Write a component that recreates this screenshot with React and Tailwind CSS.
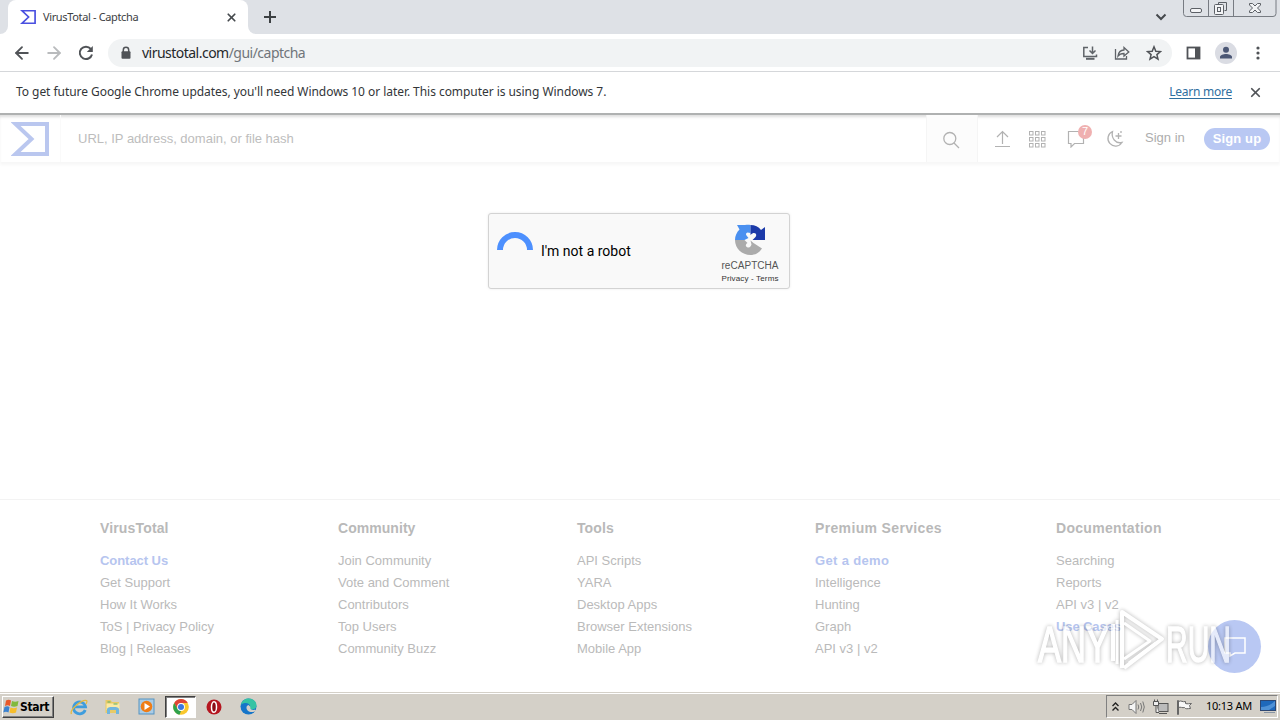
import { ArrowLeft, ArrowRight, X } from 'lucide-react'

const footerColumns = [
  {
    title: 'VirusTotal',
    width: 'w-[238px]',
    spacing: 'tracking-[0.15px]',
    linkSpacing: 'tracking-[-0.05px]',
    links: ['Contact Us', 'Get Support', 'How It Works', 'ToS | Privacy Policy', 'Blog | Releases'],
    highlighted: ['Contact Us'],
  },
  {
    title: 'Community',
    width: 'w-[239px]',
    spacing: 'tracking-[0.05px]',
    linkSpacing: '',
    links: ['Join Community', 'Vote and Comment', 'Contributors', 'Top Users', 'Community Buzz'],
    highlighted: [],
  },
  {
    title: 'Tools',
    width: 'w-[238px]',
    spacing: 'tracking-[0.1px]',
    linkSpacing: '',
    links: ['API Scripts', 'YARA', 'Desktop Apps', 'Browser Extensions', 'Mobile App'],
    highlighted: [],
  },
  {
    title: 'Premium Services',
    width: 'w-[241px]',
    spacing: 'tracking-[0.35px]',
    linkSpacing: 'tracking-[0.35px]',
    links: ['Get a demo', 'Intelligence', 'Hunting', 'Graph', 'API v3 | v2'],
    highlighted: ['Get a demo'],
  },
  {
    title: 'Documentation',
    width: 'w-[180px]',
    spacing: 'tracking-[0.3px]',
    linkSpacing: 'tracking-[-0.1px]',
    links: ['Searching', 'Reports', 'API v3 | v2', 'Use Cases'],
    highlighted: ['Use Cases'],
  },
]

const Sigma = ({ className }) => (
  <svg className={className} viewBox="0 0 38 34" fill="none" stroke="currentColor" strokeWidth="4">
    <path d="M4.5 2H36V32H4.5L20.5 17Z" />
  </svg>
)

const TabStrip = () => (
  <div className="flex h-[34px] bg-[#dee1e6]">
    <div className="w-2 h-full bg-white">
      <div className="h-full rounded-br-lg bg-[#dee1e6]"></div>
    </div>
    <div className="w-[240px] h-full rounded-t-lg bg-white flex items-center pl-3 pr-2.5">
      <Sigma className="w-4 h-4 text-[#4a50e0]" />
      <span className="ml-[7px] w-[183px] whitespace-nowrap text-[11px] tracking-[-0.35px] text-[#3c4043]">VirusTotal - Captcha</span>
      <X size={13} strokeWidth={3.2} className="shrink-0 text-[#45494d]" />
    </div>
    <div className="w-2 h-full bg-white">
      <div className="h-full rounded-bl-lg bg-[#dee1e6]"></div>
    </div>
    <svg className="w-3.5 h-3.5 ml-[7px] mt-2.5" viewBox="0 0 14 14" stroke="#3c4043" strokeWidth="2">
      <path d="M7 1v12M1 7h12" />
    </svg>
    <svg className="w-3 h-3 ml-auto mt-[11px] mr-4" viewBox="0 0 12 12" fill="none" stroke="#45494d" strokeWidth="2">
      <path d="M1.500 3.500L6 8l4.500-4.500" />
    </svg>
    <svg className="w-[94px] h-[18px] mr-[3px]" viewBox="0 0 94 18" fill="none" stroke="#777b82">
      <path d="M.5 0V13.500Q.5 16.500 3.500 16.500H90Q93 16.500 93 13.500V0M25.500 0V16.500M50.500 0V16.500" />
      <g stroke="#5c6066">
        <rect x="7.500" y="8.500" width="11" height="4" rx="1.500" fill="#f3f4f6" />
        <path d="M35.500 4.500V2.500h8v8h-2" />
        <rect x="31.500" y="4.500" width="9" height="10" rx="1" fill="#f3f4f6" />
        <rect x="34.500" y="7.500" width="3" height="4" />
        <path fill="#f3f4f6" d="M66.500 3.500h3l2.500 2.500 2.500-2.500h3v1.500l-3 3 3 3v1.500h-3L72 10l-2.500 2.500h-3V11l3-3-3-3z" />
      </g>
    </svg>
  </div>
)

const AddressBar = () => (
  <div className="flex h-[38px] items-center border-b border-[#d5d7da] bg-white">
    <div className="flex w-[108px] items-center pl-3 gap-3">
      <ArrowLeft size={20} strokeWidth={2.2} className="text-[#505357]" />
      <ArrowRight size={20} strokeWidth={2.2} className="text-[#b9bbbd]" />
      <svg className="ml-0.5 w-4 h-4" viewBox="0 0 16 16" fill="none" stroke="#505357" strokeWidth="2">
        <path d="M12.800 3.900A6.200 6.200 0 1 0 14 9.500" />
        <path d="M14.800 1v6h-6z" fill="#505357" stroke="none" />
      </svg>
    </div>
    <div className="flex h-7 w-[1064px] items-center rounded-full bg-[#f1f3f4] pl-[13px]">
      <svg className="w-2.5 h-3.5" viewBox="0 0 10 14">
        <path d="M2.300 6V4a2.700 2.700 0 0 1 5.400 0v2" fill="none" stroke="#505357" strokeWidth="1.500" />
        <rect x=".5" y="5.200" width="9" height="7.600" rx="1" fill="#505357" />
      </svg>
      <span className="ml-[11px] whitespace-nowrap text-[14px] tracking-[-0.52px] text-[#25282b]">
        virustotal.com<span className="text-[#70757a]">/gui/captcha</span>
      </span>
      <div className="ml-auto mr-2.5 flex items-center gap-4">
        <svg className="w-4 h-4" viewBox="0 0 16 16" fill="none" stroke="#5f6368" strokeWidth="1.500">
          <path d="M6 2.500H1.800v9h12.700V9.500M10.500 1.500v6.500M7.500 5.500l3 3 3-3" />
          <path d="M4 13.800h8.500" strokeWidth="2" />
        </svg>
        <svg className="w-4 h-4" viewBox="0 0 16 16" fill="none" stroke="#5f6368" strokeWidth="1.300">
          <path d="M1.500 4v10h11v-3M4 11c.5-4 2.500-5.800 6-6V2.500L14.800 7 10 11V8.500C7 8.500 5.500 9 4 11z" />
        </svg>
        <svg className="w-4 h-4" viewBox="0 0 16 16" fill="none" stroke="#505357" strokeWidth="1.500">
          <path d="M8 1.800l1.800 4.400 4.700.4-3.600 3 1.100 4.600L8 11.700l-4 2.500 1.100-4.600-3.600-3 4.700-.4z" />
        </svg>
      </div>
    </div>
    <svg className="w-[15px] h-3.5 ml-3.5" viewBox="0 0 15 14">
      <rect x="1.500" y="1.500" width="12" height="11" fill="none" stroke="#505357" strokeWidth="1.800" />
      <path d="M9 1.500h4.500v11H9z" fill="#505357" />
    </svg>
    <svg className="w-[22px] h-[22px] ml-3.5" viewBox="0 0 22 22">
      <circle cx="11" cy="11" r="11" fill="#dadce3" />
      <circle cx="11" cy="7.800" r="3" fill="#4b5775" />
      <path d="M5 16.500v-1.500c0-2 3.500-3 6-3s6 1 6 3v1.500z" fill="#4b5775" />
    </svg>
    <svg className="w-4 h-4 ml-[13px]" viewBox="0 0 16 16" fill="#505357">
      <circle cx="8" cy="3" r="1.600" />
      <circle cx="8" cy="8" r="1.600" />
      <circle cx="8" cy="13" r="1.600" />
    </svg>
  </div>
)

const UpdateNotice = () => (
  <div className="flex h-[41px] items-center bg-white pl-4 pr-[17px] pb-0.5 text-[12px] text-[#333639]">
    <span className="whitespace-nowrap tracking-[-0.05px]">
      To get future Google Chrome updates, you&apos;ll need Windows 10 or later. This computer is using Windows 7.
    </span>
    <a className="ml-auto whitespace-nowrap tracking-[-0.25px] text-[#2f6f9f] underline underline-offset-2">Learn more</a>
    <X size={15} strokeWidth={2.8} className="ml-[16px] mt-0.5 text-[#505357]" />
  </div>
)

const SiteHeader = () => (
  <header className="flex h-[49px] border-t-2 border-[#afb1b1] bg-white font-['Liberation_Sans',sans-serif] shadow-[inset_0_3px_3px_-1px_#dedede,0_3px_3px_#f7f7f7] text-[13px]">
    <div className="flex w-[61px] items-center border-r border-[#fafafa] pl-[11px]">
      <Sigma className="w-[38px] h-[34px] text-[#bac7ef]" />
    </div>
    <div className="flex grow items-center pl-[17px] text-[#bdbdbd]">URL, IP address, domain, or file hash</div>
    <div className="flex w-[52px] items-center justify-center border-x border-[#f5f5f5] bg-[#fcfcfc]">
      <svg className="mt-0.5 mr-0.5 w-[18px] h-[18px]" viewBox="0 0 18 18" fill="none" stroke="#b2b2b2" strokeWidth="1.300">
        <circle cx="7.800" cy="7.500" r="6" />
        <path d="M12 12l5 5" />
      </svg>
    </div>
    <div className="flex w-[302px] items-center pl-[15px]">
      <svg className="w-[18px] h-[18px]" viewBox="0 0 18 18" fill="none" stroke="#b2b2b2" strokeWidth="1.200">
        <path d="M9.500 14V1.500M4 7L9.500 1.500 15 7M2 16.500h15" />
      </svg>
      <svg className="ml-[17px] w-[18px] h-[18px]" viewBox="0 0 18 18" fill="none" stroke="#b2b2b2">
        {[1.5, 7.5, 13.5].map((y) =>
          [1.5, 7.5, 13.5].map((x) => <rect key={`${x}-${y}`} x={x} y={y} width="3.500" height="3.500" />)
        )}
      </svg>
      <div className="relative ml-[21px]">
        <svg className="w-[18px] h-[18px]" viewBox="0 0 18 18" fill="none" stroke="#b2b2b2" strokeWidth="1.200">
          <path d="M1.500 1.500h15v12h-9l-3.500 3.500v-3.500H1.500z" />
        </svg>
        <span className="absolute -top-[5px] left-[11px] flex h-3.5 w-3.5 items-center justify-center rounded-full bg-[#efb0b0] text-[11px] text-white">7</span>
      </div>
      <svg className="ml-[21px] w-[18px] h-[18px]" viewBox="0 0 18 18" fill="none" stroke="#b2b2b2" strokeWidth="1.300">
        <path d="M6.500 1.500a7.600 7.600 0 1 0 9.500 11C9.500 14 5 8 6.500 1.500z" />
        <path d="M12.500 3v6M9.500 6h6M15 1v2" />
      </svg>
      <span className="-mt-0.5 ml-[21px] w-[59px] whitespace-nowrap text-[#adadad]">Sign in</span>
      <button className="h-[22px] w-[66px] whitespace-nowrap rounded-full bg-[#b9c8f3] text-[13px] font-bold tracking-[0.1px] text-white">Sign up</button>
    </div>
  </header>
)

const Captcha = () => (
  <div className="mt-[51px] ml-[488px] flex h-[76px] w-[302px] rounded-[3px] border border-[#d3d3d3] bg-[#f9f9f9] shadow-[0_0_3px_rgba(0,0,0,0.08)]">
    <svg className="ml-2 mt-[18px] w-9 h-[18px]" viewBox="0 0 36 18" fill="none" stroke="#4d90fe" strokeWidth="6">
      <path d="M3 18a15 15 0 0 1 30 0" />
    </svg>
    <span className="ml-2 mt-[27px] w-[171px] whitespace-nowrap font-['Roboto',sans-serif] text-[14px] leading-5 text-black">I&apos;m not a robot</span>
    <div className="mt-2.5 flex w-[76px] flex-col items-center font-['Liberation_Sans',sans-serif] text-[#555]">
      <svg className="w-8 h-8" viewBox="0 0 32 32">
        <path d="M16.500 1v8l-3-.5c-1.500.5-2 1.500-1 3l2 2.500-4 2H1c0-4 1.500-7.500 4.500-10.500L3 1h8c2-.2 3.500-.3 5.500 0z" fill="#4a90f0" />
        <path d="M16.500 1c4.500 0 8 1.500 10.500 5l4-3v13H18.500l3-3c1.500-2 .5-4-1.500-4-1 0-2 .5-3.500 2z" fill="#1c3aa9" />
        <path d="M1 16h9.500l3 3c-2.500 1.500-2 4 .5 4.500 2 .4 3-1.500 3.500-3l-1-4 3 2.500 8.500 5.500c-3 4.500-7 6.500-11.500 6.500C8 31 1 24.500 1 16z" fill="#ababab" />
      </svg>
      <span className="mt-[4px] whitespace-nowrap text-[10px] leading-3 tracking-[0.05px]">reCAPTCHA</span>
      <span className="mt-px whitespace-nowrap text-[8px] leading-3 tracking-[0.15px] text-[#333]">Privacy - Terms</span>
    </div>
  </div>
)

const Footer = () => (
  <footer className="mt-auto flex h-[193px] border-t border-[#f3f3f3] pl-[100px] pt-[18px] font-['Liberation_Sans',sans-serif]">
    {footerColumns.map((col) => (
      <div key={col.title} className={`${col.width} shrink-0`}>
        <h3 className={`mb-3 whitespace-nowrap text-[14px] font-bold leading-5 text-[#b9b9b9] ${col.spacing}`}>{col.title}</h3>
        {col.links.map((link) => (
          <a
            key={link}
            className={`block whitespace-nowrap text-[13px] leading-[22px] ${
              col.highlighted.includes(link) ? `font-bold text-[#b6c5ef] ${col.linkSpacing}` : 'text-[#bababa]'
            }`}
          >
            {link}
          </a>
        ))}
      </div>
    ))}
  </footer>
)

const ChatButton = () => (
  <div className="absolute left-[1208px] top-[620px] flex h-[53px] w-[53px] items-center justify-center rounded-full bg-[#b9c8f3]">
    <svg className="w-6 h-6" viewBox="0 0 24 24" fill="none" stroke="#fff" strokeWidth="1.500">
      <path d="M2 3h20v15H12l-5 3v-3H2z" />
    </svg>
  </div>
)

const Watermark = () => (
  <svg
    className="absolute left-[1034px] top-[606px] h-[70px] w-[204px] opacity-65 drop-shadow-[0_0_2px_rgba(0,0,0,0.45)]"
    viewBox="0 0 204 70"
    fill="#fff"
    stroke="#fff"
    strokeWidth="1.500"
    fontFamily="Liberation Sans, sans-serif"
    fontSize="50"
  >
    <text x="4" y="56" textLength="71" lengthAdjust="spacingAndGlyphs">ANY</text>
    <text x="132" y="56" textLength="65" lengthAdjust="spacingAndGlyphs">RUN</text>
    <g fill="none" strokeWidth="4" strokeLinejoin="round">
      <path d="M79 18v37M88 62V6L128 33 90 62" />
      <path d="M90 17l26 18-26 18M83 14v44M95 57l27-20" strokeWidth="3" />
    </g>
  </svg>
)

const WindowsFlag = () => (
  <svg className="w-4 h-4" viewBox="0 0 16 16">
    <path d="M3 1.500c2-1 3.500-1 5 0L7 7C5.500 6 4 6 2 7z" fill="#e8582a" />
    <path d="M9 2c2 1 4 1 6.500 0l-1 5c-2.500 1-4.500 1-6.500 0z" fill="#82b93c" />
    <path d="M1.500 8c2-1 3.500-1 5 0l-1 5.500C4 12.500 2 12.500.3 13.500z" fill="#3b82d0" />
    <path d="M7.500 8.500c2 1 4 1 6.500 0l-1 5c-2 1-4.500 1-6.500 0z" fill="#f6bd2b" />
  </svg>
)

const ChromeLogo = () => (
  <svg className="w-4 h-4" viewBox="0 0 16 16">
    <circle cx="8" cy="8" r="7.800" fill="#f9c72c" />
    <path d="M1.200 4.100A7.800 7.800 0 0 1 14.800 4.100H8L4.600 10z" fill="#df4537" />
    <path d="M1.200 4.100L4.600 10 8 11.900l-1.500 3.800A7.800 7.800 0 0 1 1.200 4.100z" fill="#2fa24c" />
    <circle cx="8" cy="8" r="3.900" fill="#fff" />
    <circle cx="8" cy="8" r="3" fill="#3b78e0" />
  </svg>
)

const Taskbar = () => (
  <div className="flex h-7 items-center border-t border-[#d4d0c8] bg-[#d4d0c8] pl-0.5 pr-0.5 shadow-[inset_0_1px_0_#fff]">
    <button className="flex h-[22px] w-[52px] items-center border border-t-white border-l-white border-b-[#404040] border-r-[#404040] shadow-[inset_-1px_-1px_0_#808080] font-['DejaVu_Sans_Condensed','DejaVu_Sans',sans-serif] text-[12px] font-bold tracking-[-0.35px] text-black">
      <WindowsFlag />
      <span className="ml-px">Start</span>
    </button>
    <svg className="ml-4 w-[18px] h-[18px]" viewBox="0 0 18 18" fill="none">
      <path d="M15.200 12A6 6 0 1 1 15.500 8.800H5" stroke="#3f9ddd" strokeWidth="2.800" />
      <path d="M1.500 16C-1 12 12 1 16.500 2.500c.8.500.3 2-.5 3.500" stroke="#e5b93f" strokeWidth="1.300" />
    </svg>
    <svg className="ml-4 w-[18px] h-[18px]" viewBox="0 0 18 18">
      <path d="M1.500 2h5l1.500 2h7v11h-13.500z" fill="#e8ca66" />
      <path d="M2.500 5.500h13V12h-13z" fill="#fbeaa4" />
      <path d="M3 16v-4.500c0-2 2-2.500 6-2.500s6 .5 6 2.500V16h-3v-4H6v4z" fill="#71b6de" />
      <path d="M3.500 4h3M9.500 6h4" stroke="#5daf67" />
    </svg>
    <svg className="ml-4 w-[17px] h-[17px]" viewBox="0 0 17 17">
      <rect x="1" y="1" width="15" height="15" fill="#aacce5" stroke="#5493c1" />
      <circle cx="8.500" cy="8.500" r="5.800" fill="#ef7d16" />
      <path d="M6.500 5v7l5.500-3.500z" fill="#fff" />
    </svg>
    <div className="ml-2.5 flex h-[22px] w-[31px] items-center justify-center border border-t-[#404040] border-l-[#404040] border-b-white border-r-white bg-white shadow-[inset_1px_1px_0_#808080]">
      <ChromeLogo />
    </div>
    <svg className="ml-2.5 w-4 h-4" viewBox="0 0 16 16">
      <circle cx="8" cy="8" r="7.500" fill="#b51620" />
      <ellipse cx="8" cy="8" rx="2.500" ry="5.300" fill="#8b0c15" stroke="#fff" strokeWidth="1.500" />
    </svg>
    <svg className="ml-[18px] w-[17px] h-[17px]" viewBox="0 0 17 17">
      <circle cx="8.500" cy="8.500" r="8" fill="#1675c9" />
      <path d="M.8 7C2 2 5.500.5 8.500.5c5 0 8 3.500 8 7 0 3-2.500 4-5 4-1.500 0-2-.7-1.500-1.500C11 7 8 4.500 5 5 3 5.200 1.500 6 .8 7z" fill="#35c3a4" />
      <path d="M8.500 7C5 8 6 14 12 14c1.500 0 2.500-.4 3.300-1 1-.7.700-1.500-.8-1.300-3 .7-5-.7-4-2.700z" fill="#d4d0c8" />
    </svg>
    <div className="ml-auto flex h-[23px] w-[172px] items-center border border-t-[#808080] border-l-[#808080] border-b-white border-r-white pl-[5px]">
      <svg className="w-[7px] h-2.5" viewBox="0 0 7 10" fill="none" stroke="#222" strokeWidth="1.400">
        <path d="M.5 4l3-3 3 3M.5 8.500l3-3 3 3" />
      </svg>
      <svg className="ml-[9px] w-[17px] h-4" viewBox="0 0 17 16" fill="none" stroke="#777">
        <path d="M1 5.500h3L8 1.500v13l-4-4H1z" fill="#f5f5f5" />
        <path d="M10 5.500q1.500 2.500 0 5M12.500 4q2.500 4 0 8M14.800 2.500q3 5.500 0 11" />
      </svg>
      <svg className="ml-2 w-4 h-4" viewBox="0 0 16 16" fill="#eee" stroke="#555">
        <rect x="5" y="4.500" width="10" height="8" fill="#bbb" />
        <path d="M.5 2.500h5v4h-5zM1.500.5v2M4.500.5v2M3 6.500v7h3M6 14.500h8" />
      </svg>
      <svg className="ml-[7px] w-[17px] h-4" viewBox="0 0 17 16" fill="#f8f8f8" stroke="#666">
        <path d="M2.500 2.500c3-1.500 4 1 7 0v2c2 .7 4 0 6 0l-2 2 1 3c-3 0-5 1-6-1-2 .8-4-1-6 0z" />
        <path d="M1.500 1.500v14h1v-14z" />
      </svg>
      <span className="ml-[13px] w-[52px] whitespace-nowrap text-[11px] tracking-[-0.25px] text-black">10:13 AM</span>
      <svg className="ml-0.5 w-4 h-[15px]" viewBox="0 0 16 15">
        <rect x=".5" y="1.500" width="15" height="10" fill="#1e68bb" stroke="#2d4773" />
        <path d="M1 8Q9 8 15 2v5L9 11H1z" fill="#4f91d6" />
        <path d="M4 13.500h11" stroke="#8995a4" />
      </svg>
    </div>
  </div>
)

const App = () => {
  return (
    <div className="relative flex h-screen w-[1280px] flex-col overflow-hidden bg-white font-['Noto_Sans',sans-serif]">
      <TabStrip />
      <AddressBar />
      <UpdateNotice />
      <SiteHeader />
      <Captcha />
      <Footer />
      <Taskbar />
      <ChatButton />
      <Watermark />
    </div>
  )
}

export default App
